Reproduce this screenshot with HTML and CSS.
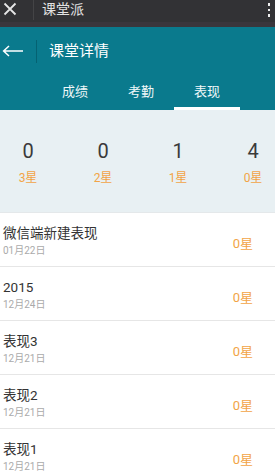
FILE: index.html
```html
<!DOCTYPE html>
<html lang="zh">
<head>
<meta charset="utf-8">
<link rel="stylesheet" href="styles.css">
</head>
<body>
<div class="app">
  <div class="sysbar">
    <svg class="close" width="14" height="14" viewBox="0 0 14 14"><path d="M1.5 1.5L12.5 12.5M12.5 1.5L1.5 12.5" stroke="#e6e6e6" stroke-width="1.8" fill="none"/></svg>
    <span class="sysdiv"></span>
    <span class="systitle">课堂派</span>
    <span class="dots"><i></i><i></i><i></i></span>
  </div>
  <header class="header">
    <div class="titlerow">
      <svg class="back" width="22" height="12" viewBox="0 0 22 12"><path d="M21 6H2M7 1L1.6 6L7 11" stroke="#fff" stroke-width="1.5" fill="none"/></svg>
      <span class="hdiv"></span>
      <h1 class="title">课堂详情</h1>
    </div>
    <nav class="tabs">
      <span class="tab">成绩</span>
      <span class="tab">考勤</span>
      <span class="tab active">表现</span>
    </nav>
  </header>
  <section class="stats">
    <div class="stat"><span class="num">0</span><span class="lbl">3星</span></div>
    <div class="stat"><span class="num">0</span><span class="lbl">2星</span></div>
    <div class="stat"><span class="num">1</span><span class="lbl">1星</span></div>
    <div class="stat"><span class="num">4</span><span class="lbl">0星</span></div>
  </section>
  <ul class="list">
    <li class="item"><div class="info"><span class="name">微信端新建表现</span><span class="date">01月22日</span></div><span class="star">0星</span></li>
    <li class="item"><div class="info"><span class="name">2015</span><span class="date">12月24日</span></div><span class="star">0星</span></li>
    <li class="item"><div class="info"><span class="name">表现3</span><span class="date">12月21日</span></div><span class="star">0星</span></li>
    <li class="item"><div class="info"><span class="name">表现2</span><span class="date">12月21日</span></div><span class="star">0星</span></li>
    <li class="item"><div class="info"><span class="name">表现1</span><span class="date">12月21日</span></div><span class="star">0星</span></li>
  </ul>
</div>
</body>
</html>
```
FILE: styles.css
```css
html, body {
  margin: 0;
  padding: 0;
  background: #fff;
}
body {
  font-family: Roboto, "Noto Sans CJK SC", sans-serif;
  width: 275px;
  height: 476px;
  overflow: hidden;
}
.app {
  width: 275px;
  display: flex;
  flex-direction: column;
}
.sysbar {
  height: 22px;
  border-bottom: 5px solid #3a363c;
  background: #323235;
  display: flex;
  align-items: flex-start;
}
.close {
  margin: 2px 0 0 3px;
}
.sysdiv {
  width: 1px;
  height: 20px;
  background: #444446;
  margin-left: 16px;
}
.systitle {
  margin-left: 8px;
  color: #e2e2e2;
  font-size: 14px;
  line-height: 18px;
}
.dots {
  margin-left: auto;
  margin-right: 5px;
  margin-top: 3px;
  display: flex;
  flex-direction: column;
  gap: 3px;
}
.dots i {
  display: block;
  width: 2.5px;
  height: 2.5px;
  background: #eee;
}
.header {
  background: #0a7a8d;
  display: flex;
  flex-direction: column;
}
.titlerow {
  height: 48px;
  display: flex;
  align-items: center;
}
.back {
  margin-left: 2px;
}
.hdiv {
  width: 1px;
  height: 23px;
  background: #056272;
  margin-left: 12px;
}
.title {
  margin: 0 0 0 12px;
  font-size: 15px;
  font-weight: normal;
  color: #fff;
  line-height: 20px;
}
.tabs {
  height: 35px;
  display: flex;
  padding-left: 42px;
}
.tab {
  width: 66px;
  text-align: center;
  color: #f0f8f9;
  font-size: 13px;
  line-height: 34px;
  box-sizing: border-box;
  border-bottom: 3px solid transparent;
}
.tab.active {
  border-bottom-color: #fff;
}
.stats {
  height: 102px;
  background: #e8f0f3;
  display: flex;
  gap: 35px;
  padding-left: 8px;
}
.stat {
  width: 40px;
  display: flex;
  flex-direction: column;
  align-items: center;
  padding-top: 29px;
}
.num {
  font-size: 20px;
  line-height: 24px;
  color: #3a3a3a;
}
.lbl {
  margin-top: 8px;
  font-size: 12px;
  line-height: 14px;
  color: #f2a446;
}
.list {
  list-style: none;
  margin: 0;
  padding: 0;
  border-top: 1px solid #e4e8ea;
}
.item {
  height: 53px;
  border-bottom: 1px solid #e6e6e6;
  display: flex;
  align-items: center;
  padding: 0 22px 0 3px;
}
.info {
  display: flex;
  flex-direction: column;
  padding-top: 2px;
}
.name {
  font-size: 13.5px;
  line-height: 18px;
  color: #333;
}
.date {
  margin-top: 2px;
  font-size: 10px;
  line-height: 14px;
  color: #aaa;
}
.star {
  margin-left: auto;
  margin-top: 6px;
  font-size: 13px;
  color: #f2a446;
}
```
